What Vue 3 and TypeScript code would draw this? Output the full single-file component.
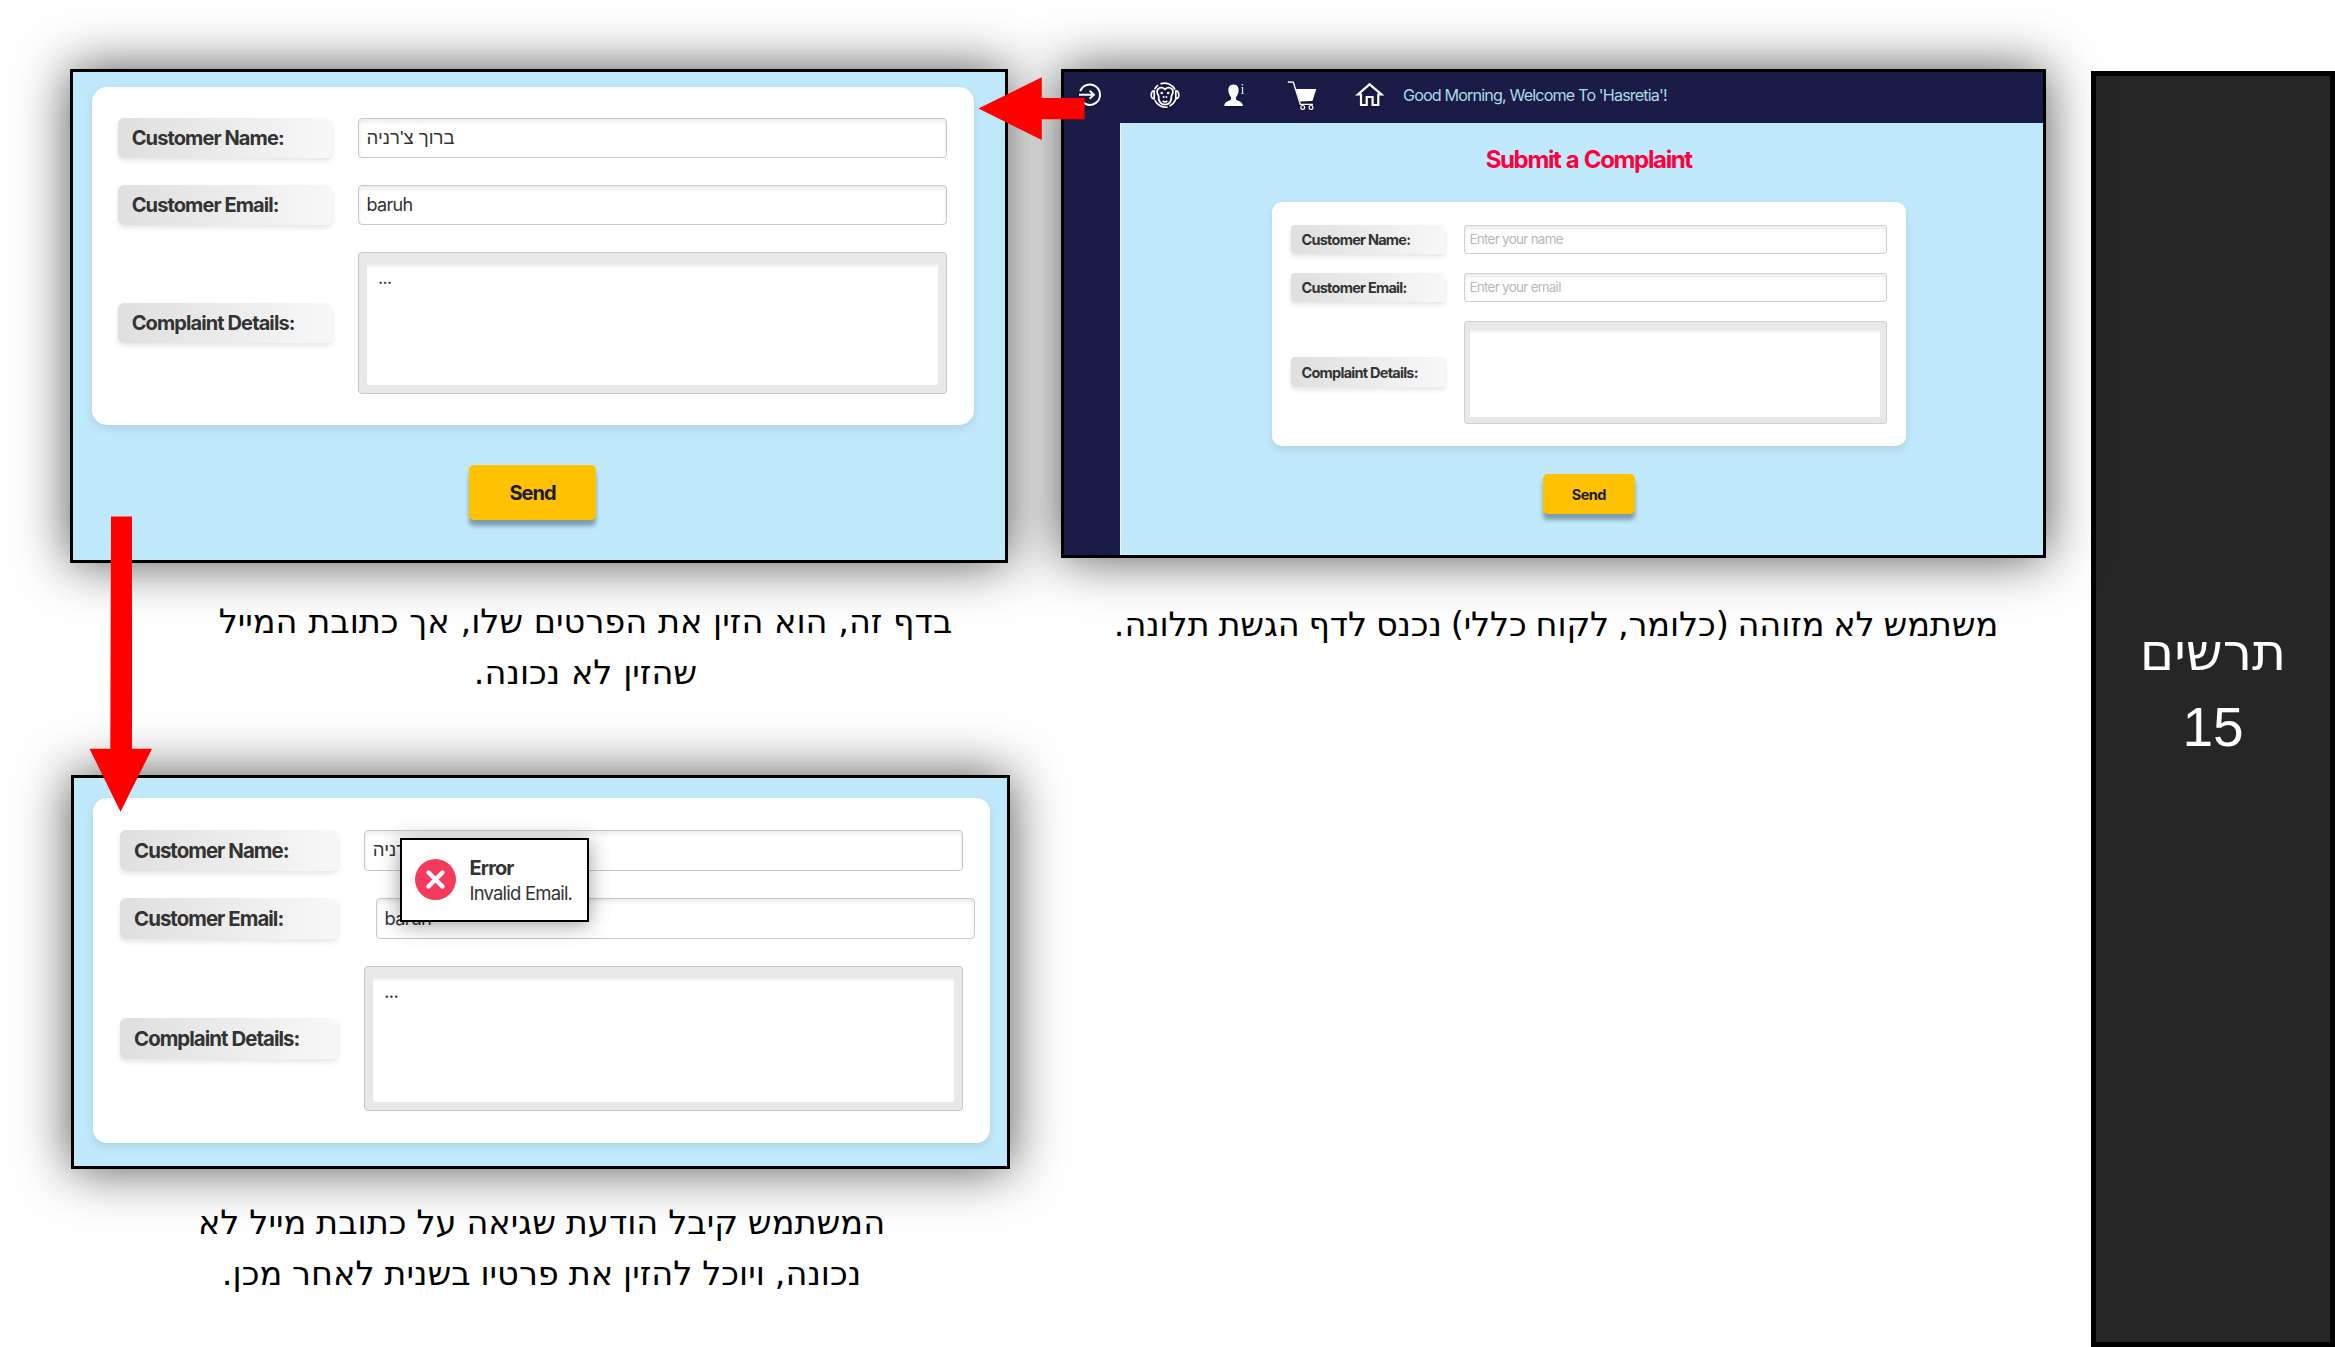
<script setup lang="ts">
interface Field {
  label: string
  value: string
  placeholder?: string
  kind: 'line' | 'area'
  hebrew?: boolean
  shifted?: boolean
}

const guestFields: Field[] = [
  { label: 'Customer Name:', value: '', placeholder: 'Enter your name', kind: 'line' },
  { label: 'Customer Email:', value: '', placeholder: 'Enter your email', kind: 'line' },
  { label: 'Complaint Details:', value: '', kind: 'area' },
]

const filledFields: Field[] = [
  { label: 'Customer Name:', value: "ברוך צ'רניה", kind: 'line', hebrew: true },
  { label: 'Customer Email:', value: 'baruh', kind: 'line' },
  { label: 'Complaint Details:', value: '...', kind: 'area' },
]

const rejectedFields: Field[] = filledFields.map((f, i) => ({ ...f, shifted: i === 1 }))
</script>

<template>
  <div class="page">
    <div class="col col-left">
      <section class="panel filled">
        <div class="card">
          <div v-for="f in filledFields" :key="f.label" class="row">
            <span class="label">{{ f.label }}</span>
            <div :class="['field', f.kind]">
              <div v-if="f.kind === 'area'" class="inner"><span class="value">{{ f.value }}</span></div>
              <span v-else :class="['value', { hebrew: f.hebrew }]">{{ f.value }}</span>
            </div>
          </div>
        </div>
        <button class="send">Send</button>
      </section>
      <p class="caption cap-filled" dir="rtl">בדף זה, הוא הזין את הפרטים שלו, אך כתובת המייל<br>שהזין לא נכונה.</p>

      <section class="panel rejected">
        <div class="card">
          <div v-for="f in rejectedFields" :key="f.label" class="row">
            <span class="label">{{ f.label }}</span>
            <div :class="['field', f.kind, { shifted: f.shifted }]">
              <div v-if="f.kind === 'area'" class="inner"><span class="value">{{ f.value }}</span></div>
              <span v-else :class="['value', { hebrew: f.hebrew }]">{{ f.value }}</span>
            </div>
          </div>
        </div>
        <div class="toast">
          <svg class="toast-icon" viewBox="0 0 41 41">
            <circle cx="20.5" cy="20.5" r="20.5" fill="#f43b5e" />
            <path d="M13.5 13.5l14 14M27.5 13.5l-14 14" stroke="#fff" stroke-width="4.4" stroke-linecap="round" />
          </svg>
          <div class="toast-text">
            <strong>Error</strong>
            <span>Invalid Email.</span>
          </div>
        </div>
      </section>
      <p class="caption cap-rejected" dir="rtl">המשתמש קיבל הודעת שגיאה על כתובת מייל לא<br>נכונה, ויוכל להזין את פרטיו בשנית לאחר מכן.</p>
    </div>

    <div class="col col-mid">
      <section class="panel guest">
        <header class="topbar">
          <svg class="icon login" viewBox="0 0 30 30">
            <path d="M5.2 11.2A10.2 10.2 0 1 1 5.2 18.2" />
            <path d="M4 14.7H19M14.6 10.6l4.3 4.1-4.3 4.1" />
          </svg>
          <svg class="icon monkey" viewBox="0 0 30 30">
            <path d="M10.5 3.9A12 12 0 0 1 25 9.5M4.7 9.2A12 12 0 0 1 8 5.2M25.6 19.5A12 12 0 0 1 19.5 26M17.5 27.1A12 12 0 0 1 4.8 20.2" stroke-width="1.7" />
            <path d="M4.2 11C.4 10.5 0 18.6 4.2 18.8ZM25.8 11C29.6 10.5 30 18.6 25.8 18.8Z" stroke-width="1.7" />
            <path d="M15 9.3C11.5 5.8 6.3 8.3 7.2 12.8C7.5 14.5 8.7 15 8.7 16.5C8 21.5 11 24.6 15 24.6S22 21.5 21.3 16.5C21.3 15 22.5 14.5 22.8 12.8C23.7 8.3 18.5 5.8 15 9.3Z" stroke-width="1.8" />
            <path d="M12.7 20.8Q15 23 17.3 20.8" stroke-width="1.6" />
            <g fill="#fff" stroke="none">
              <circle cx="11.8" cy="13" r="1.3" /><circle cx="18.2" cy="13" r="1.3" />
              <circle cx="13.6" cy="17" r="1" /><circle cx="16.4" cy="17" r="1" />
            </g>
          </svg>
          <svg class="icon person" viewBox="0 0 30 30">
            <path d="M13.5 4.5C9.3 4.5 8.2 7.5 8.4 11C8.6 14 10 16 11 17.3V19.5C9.5 21.3 4.5 21 4.3 26H22.9C22.7 21 17.5 21.3 16 19.5V17.3C17 16 18.4 14 18.6 11C18.8 7.5 17.7 4.5 13.5 4.5Z" fill="#fff" stroke="none" />
            <text x="20.6" y="13.7" font-size="14.5" fill="#e2e2ee" stroke="none" font-family="Liberation Serif, serif">i</text>
          </svg>
          <svg class="icon cart" viewBox="0 0 30 30">
            <path d="M.8 2.5L1.8 1.8 6.3 2.2 13.3 24.3 26 24.3" stroke-width="1.3" />
            <path d="M9 9H29.3L25.5 21 13 21.5Z" fill="#fff" stroke="none" />
            <circle cx="15.7" cy="27.4" r="1.9" stroke-width="1.2" /><circle cx="24" cy="27.4" r="1.9" stroke-width="1.2" />
          </svg>
          <svg class="icon home" viewBox="0 0 30 30">
            <path d="M2.8 14.5L14.6 4.3 26.4 14.5H23.3V25H17.6V17H11.7V25H6V14.5Z" stroke-width="2.2" />
          </svg>
          <span class="greeting">Good Morning, Welcome To 'Hasretia'!</span>
        </header>
        <div class="body">
          <div class="rail"></div>
          <main class="content">
            <h1>Submit a Complaint</h1>
            <div class="card">
              <div v-for="f in guestFields" :key="f.label" class="row">
                <span class="label">{{ f.label }}</span>
                <div :class="['field', f.kind]">
                  <div v-if="f.kind === 'area'" class="inner"></div>
                  <span v-else class="placeholder">{{ f.placeholder }}</span>
                </div>
              </div>
            </div>
            <button class="send">Send</button>
          </main>
        </div>
      </section>
      <p class="caption cap-guest" dir="rtl">משתמש לא מזוהה (כלומר, לקוח כללי) נכנס לדף הגשת תלונה.</p>
    </div>

    <aside class="side" dir="rtl">
      <div class="side-word">תרשים</div>
      <div class="side-num">15</div>
    </aside>

    <svg class="arrows" viewBox="0 0 2335 1347">
      <path d="M978.5 108.5L1041.8 77.2V98H1084.6V119.2H1041.8V140Z" />
      <path d="M111 516.5H132V748.7H152L120.5 811.7 89.5 748.7H110.3Z" />
    </svg>
  </div>
</template>

<style>
html,
body {
  margin: 0;
  background: #fff;
}
</style>

<style scoped>
.page,
.page * {
  box-sizing: border-box;
}
.page {
  position: relative;
  display: flex;
  width: 2335px;
  height: 1347px;
  overflow: hidden;
  background: #fff;
  font-family: Inter, 'Liberation Sans', sans-serif;
  color: #333;
}
.col {
  flex: none;
  padding-top: 69px;
}
.col-left {
  width: 1061px;
  padding-left: 69.5px;
}
.col-mid {
  width: 1030px;
}

.panel {
  position: relative;
  border: 3px solid #000;
  background: #c1e9fc;
  box-shadow: 0 0 50px rgba(0, 0, 0, 0.68);
}
.card {
  display: flex;
  flex-direction: column;
  background: #fff;
  box-shadow: 0 4px 10px rgba(0, 0, 0, 0.1);
}
.row {
  display: flex;
  align-items: center;
}
.label {
  flex: none;
  display: flex;
  align-items: center;
  border-radius: 6px;
  background: linear-gradient(90deg, #dfdfdf, #f8f8f8);
  box-shadow: 0 3px 5px rgba(0, 0, 0, 0.1);
  font-weight: 650;
  white-space: nowrap;
}
.field {
  flex: none;
  display: flex;
  align-items: center;
  border: 1px solid #c8c8c8;
  border-radius: 4px;
  background: #fff;
  box-shadow: inset 0 3px 4px rgba(0, 0, 0, 0.08);
  white-space: nowrap;
}
.field.area {
  align-items: stretch;
  background: #e8e8e8;
  box-shadow: none;
}
.inner {
  flex: 1;
  border-radius: 2px;
  background: linear-gradient(#e8e8e8, #fff 5px);
}
.send {
  display: block;
  padding: 0;
  border: 0;
  border-radius: 5px;
  background: #ffc200;
  box-shadow: 0 6px 4px rgba(30, 50, 70, 0.42);
  color: #1b1b3c;
  font-family: Inter, sans-serif;
  font-weight: 650;
}

/* filled-in form */
.filled {
  width: 938px;
  height: 494px;
  padding: 15px 0 0 19px;
}
.filled .card {
  width: 882px;
  height: 338px;
  gap: 26.8px;
  padding: 31px 0 0 26.5px;
  border-radius: 15px;
}
.filled .label {
  width: 213.5px;
  height: 40px;
  padding-left: 13.7px;
  font-size: 20px;
  letter-spacing: -0.9px;
}
.filled .field {
  width: 588.5px;
  height: 40px;
  margin-left: 26.5px;
  padding-left: 7.5px;
}
.filled .value {
  font-size: 18px;
  letter-spacing: -0.7px;
}
.filled .field.area {
  height: 142.5px;
  padding: 10px 8px 8px;
}
.filled .inner {
  padding: 4px 0 0 11px;
}
.filled .send {
  width: 127px;
  height: 55px;
  margin: 40px 0 0 377.5px;
  font-size: 20px;
  letter-spacing: -1px;
}

/* rejected form */
.rejected {
  width: 939px;
  height: 394px;
  margin: 76.4px 0 0 1.5px;
  padding: 20px 0 0 19px;
}
.rejected .card {
  width: 897px;
  height: 345px;
  gap: 27px;
  padding: 32px 0 0 27px;
  border-radius: 14px;
}
.rejected .label {
  width: 217.5px;
  height: 41px;
  padding-left: 14px;
  font-size: 20.4px;
  letter-spacing: -0.95px;
}
.rejected .field {
  width: 598.5px;
  height: 41px;
  margin-left: 26.8px;
  padding-left: 7.5px;
}
.rejected .field.shifted {
  margin-left: 38.5px;
}
.rejected .value {
  font-size: 18.3px;
  letter-spacing: -0.7px;
}
.rejected .field.area {
  height: 145px;
  padding: 10px 8px 8px;
}
.rejected .inner {
  padding: 3px 0 0 11px;
}
.panel .value.hebrew {
  font-family: 'Liberation Sans', sans-serif;
  font-size: 18.6px;
  letter-spacing: 0;
}
.toast {
  position: absolute;
  left: 325.5px;
  top: 60px;
  display: flex;
  width: 189px;
  height: 84px;
  padding: 19px 0 0 13px;
  border: 2px solid #000;
  background: #fff;
  box-shadow: 0 3px 20px rgba(0, 0, 0, 0.38);
}
.toast-icon {
  flex: none;
  width: 41px;
  height: 41px;
}
.toast-text {
  display: flex;
  flex-direction: column;
  margin: -3px 0 0 14px;
  white-space: nowrap;
}
.toast-text strong {
  font-size: 20px;
  line-height: 25px;
  font-weight: 650;
  letter-spacing: -0.9px;
}
.toast-text span {
  font-size: 18.5px;
  line-height: 25px;
  letter-spacing: -0.8px;
}

/* empty form inside the site frame */
.guest {
  width: 985px;
  height: 489px;
  background: #1b1b48;
}
.topbar {
  display: flex;
  height: 51px;
  padding: 8px 0 0 11px;
}
.icon {
  flex: none;
  width: 30px;
  height: 30px;
  fill: none;
  stroke: #fff;
  stroke-width: 2;
  filter: drop-shadow(0 2px 1px rgba(0, 0, 0, 0.35));
  overflow: visible;
}
.monkey {
  margin-left: 44.5px;
}
.person {
  margin-left: 40.5px;
}
.cart {
  margin-left: 37px;
}
.home {
  margin-left: 38px;
}
.greeting {
  margin-left: 18px;
  color: #add8e6;
  font-size: 16.2px;
  line-height: 30px;
  letter-spacing: -0.88px;
  white-space: nowrap;
}
.body {
  display: flex;
  height: 432px;
}
.rail {
  width: 55.5px;
}
.content {
  flex: 1;
  display: flex;
  flex-direction: column;
  align-items: center;
  padding-left: 14px;
  border-left: 1px solid #eef8fd;
  background: #c1e9fc;
}
h1 {
  margin: 21px 0 0;
  height: 58px;
  color: #ff003c;
  font-size: 24px;
  line-height: 32px;
  font-weight: 650;
  letter-spacing: -1.35px;
  word-spacing: 1px;
  white-space: nowrap;
}
.guest .card {
  width: 633.5px;
  height: 244px;
  gap: 18.5px;
  padding: 22.5px 0 0 19px;
  border-radius: 10px;
}
.guest .label {
  width: 154px;
  height: 29.5px;
  padding-left: 10.5px;
  border-radius: 4px;
  font-size: 14.5px;
  letter-spacing: -0.75px;
}
.guest .field {
  width: 423px;
  height: 29.5px;
  margin-left: 18.5px;
  padding-left: 5px;
  border-radius: 3px;
  border-color: #d0d0d0;
}
.guest .field.area {
  height: 103px;
  padding: 7px 6px 5.5px 5.5px;
}
.placeholder {
  color: #b8b8b8;
  font-size: 13.4px;
  letter-spacing: -0.7px;
}
.guest .send {
  width: 91.5px;
  height: 40px;
  margin-top: 28px;
  font-size: 14.5px;
  letter-spacing: -0.6px;
}

.caption {
  position: relative;
  z-index: 1;
  margin: 0;
  color: #000;
  font-family: 'DejaVu Sans', sans-serif;
  font-size: 33.6px;
  line-height: 50.8px;
  text-align: center;
  white-space: nowrap;
}
.cap-filled {
  width: 1032px;
  margin: 34px 0 0;
}
.cap-rejected {
  width: 944px;
  margin: 29px 0 0;
  word-spacing: -0.8px;
}
.cap-guest {
  width: 990px;
  margin-top: 42px;
  letter-spacing: -0.13px;
  word-spacing: -1.6px;
}

.side {
  flex: none;
  width: 244px;
  height: 1276px;
  margin-top: 71px;
  padding-top: 538px;
  border: 5px solid #000;
  background: #262626;
  color: #fff;
  line-height: 76.5px;
  text-align: center;
}
.side-word {
  font-family: 'DejaVu Sans', sans-serif;
  font-size: 52px;
}
.side-num {
  margin-top: -1.5px;
  font-family: 'Liberation Sans', sans-serif;
  font-size: 55px;
}

.arrows {
  position: absolute;
  inset: 0;
  z-index: 3;
  width: 2335px;
  height: 1347px;
  fill: #f00;
  pointer-events: none;
}
</style>
